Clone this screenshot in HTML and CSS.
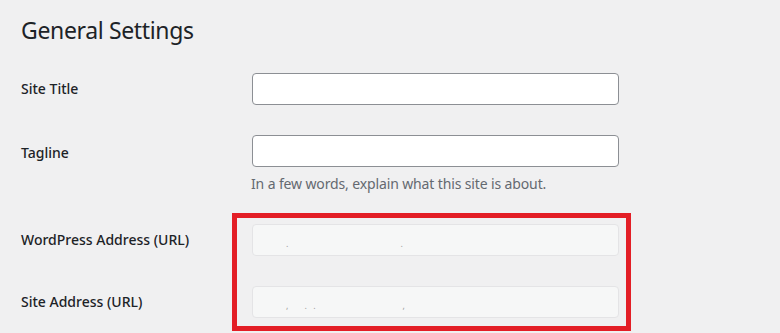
FILE: index.html
```html
<!DOCTYPE html>
<html>
<head>
<meta charset="utf-8">
<link rel="stylesheet" href="styles.css">
</head>
<body>
<div class="wrap">
  <h1 class="title">General Settings</h1>
  <div class="form">
    <div class="row">
      <label class="label">Site Title</label>
      <div class="field"><div class="input"></div></div>
    </div>
    <div class="row">
      <label class="label label-low">Tagline</label>
      <div class="field">
        <div class="input"></div>
        <p class="desc">In a few words, explain what this site is about.</p>
      </div>
    </div>
    <div class="highlighted">
      <div class="row">
        <label class="label">WordPress Address (URL)</label>
        <div class="field"><div class="input readonly"><span class="mark m1">.</span><span class="mark m2">.</span></div></div>
      </div>
      <div class="row">
        <label class="label">Site Address (URL)</label>
        <div class="field"><div class="input readonly"><span class="mark m1">,</span><span class="mark m3">. .</span><span class="mark m4">,</span></div></div>
      </div>
      <div class="redbox"></div>
    </div>
  </div>
</div>
</body>
</html>
```
FILE: styles.css
```css
html, body {
  margin: 0;
  padding: 0;
  background: #f0f0f1;
}
body {
  font-family: "Noto Sans", "Open Sans", sans-serif;
  color: #1d2327;
  width: 780px;
  height: 333px;
  overflow: hidden;
}
.wrap {
  padding: 15px 0 0 21px;
}
.title {
  margin: 0;
  font-size: 23px;
  font-weight: 400;
  line-height: 30px;
  letter-spacing: -0.35px;
  color: #1d2327;
}
.form {
  margin-top: 13px;
}
.row {
  display: flex;
  align-items: flex-start;
  padding: 15px 0;
}
.label {
  width: 231px;
  flex: none;
  font-size: 14px;
  font-weight: 500;
  line-height: 20px;
  padding-top: 6px;
  color: #1d2327;
}
.label.label-low {
  padding-top: 8px;
}
.field {
  width: 367px;
}
.input {
  box-sizing: border-box;
  height: 32px;
  width: 367px;
  background: #fff;
  border: 1px solid #8c8f94;
  border-radius: 4px;
}
.input.readonly {
  background: #f6f7f7;
  border-color: #e4e4e6;
  display: flex;
  align-items: flex-end;
  padding-bottom: 6px;
  font-size: 9px;
  line-height: 10px;
  color: #a0a0a0;
}
.mark.m1 { margin-left: 33px; }
.mark.m2 { margin-left: 112px; }
.mark.m3 { margin-left: 16px; letter-spacing: 2px; }
.mark.m4 { margin-left: 85px; }
.desc {
  margin: 7px 0 0 -1px;
  font-size: 14px;
  line-height: 20px;
  letter-spacing: -0.13px;
  color: #646970;
}
.highlighted {
  position: relative;
}
.redbox {
  position: absolute;
  left: 211px;
  top: 4px;
  width: 389px;
  height: 108px;
  border: 5px solid #e31e26;
}
```
